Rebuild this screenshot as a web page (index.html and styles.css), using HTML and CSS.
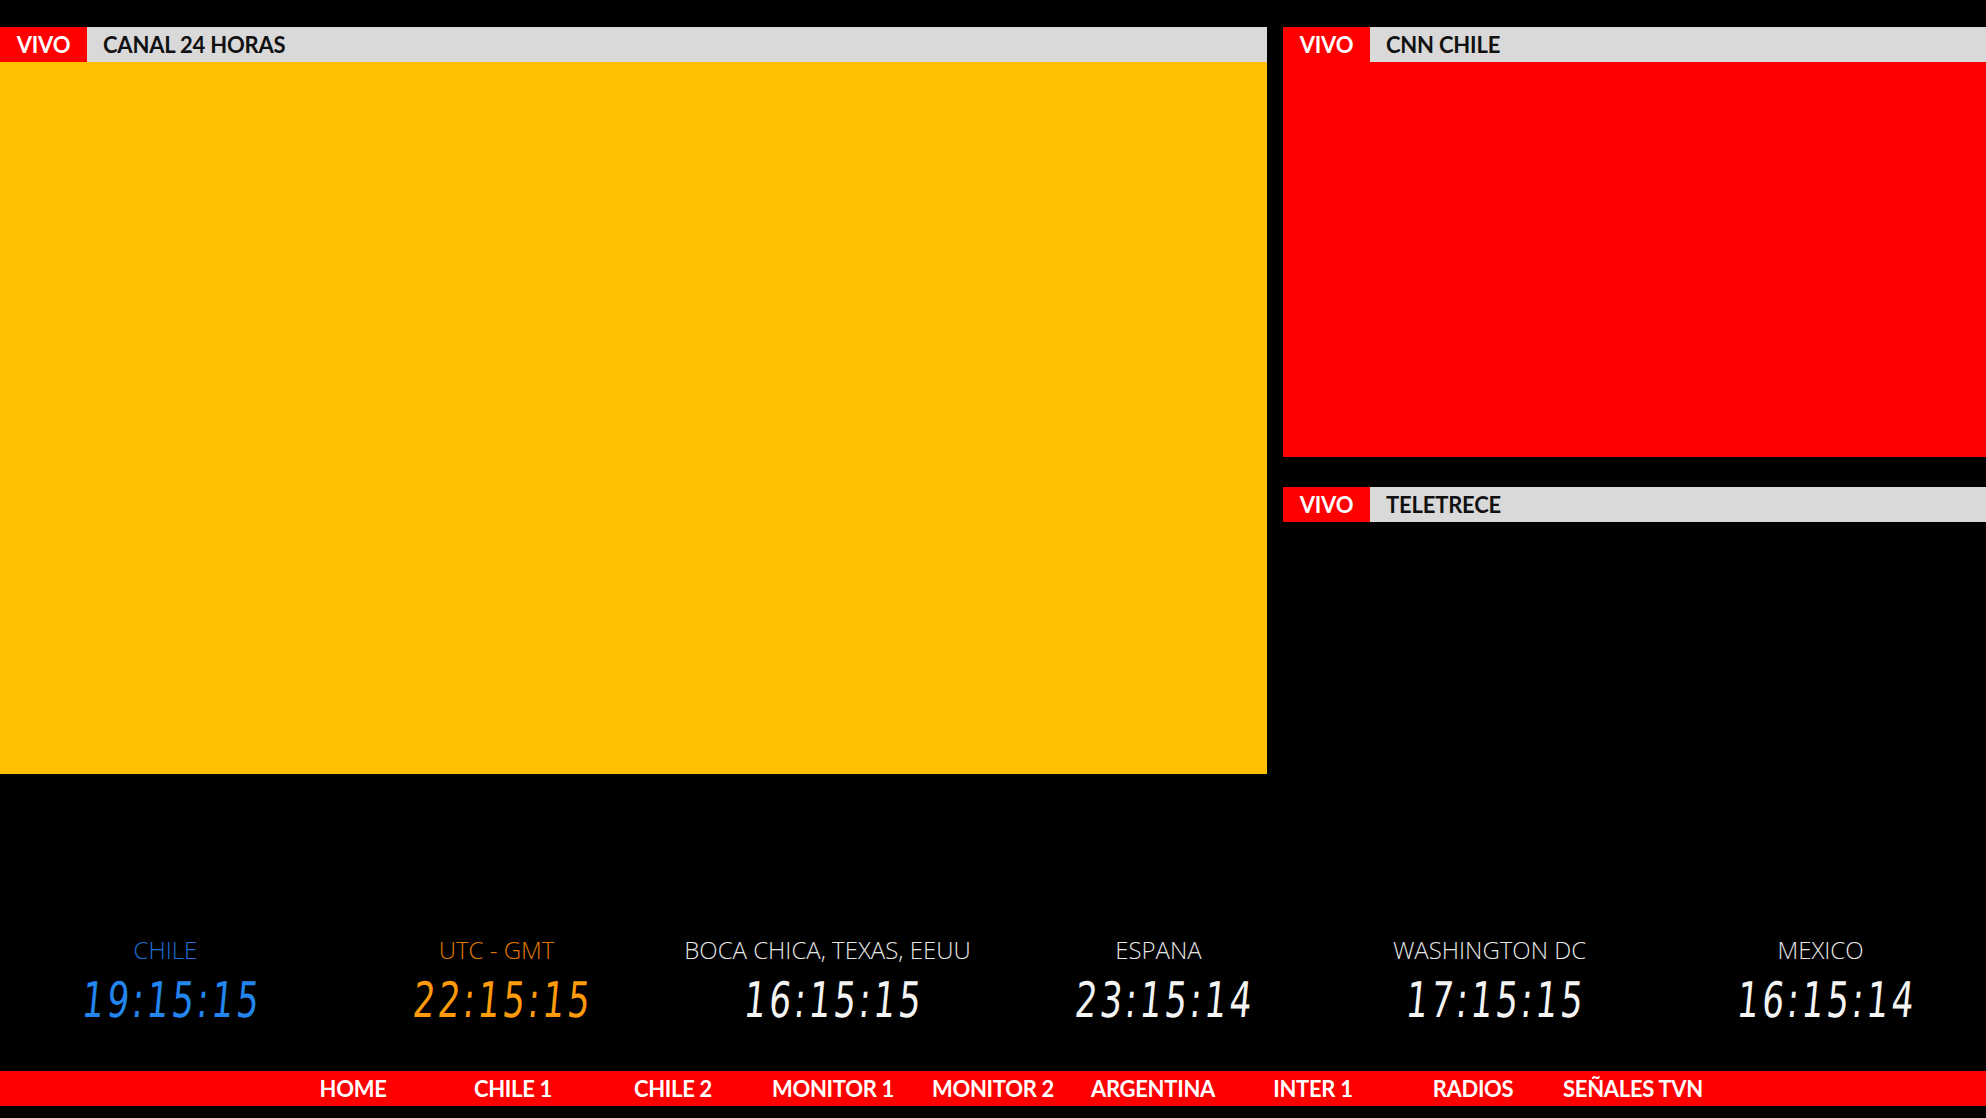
FILE: index.html
```html
<!DOCTYPE html>
<html lang="es">
<head>
<meta charset="utf-8">
<title>Monitor</title>
<link rel="stylesheet" href="styles.css">
</head>
<body>
<div class="page">
  <div class="screens">
    <section class="panel panel-main">
      <header class="panel-head"><span class="live">VIVO</span><span class="channel">CANAL 24 HORAS</span></header>
      <div class="video video-main yellow"></div>
    </section>
    <div class="side">
      <section class="panel">
        <header class="panel-head"><span class="live">VIVO</span><span class="channel">CNN CHILE</span></header>
        <div class="video video-side red"></div>
      </section>
      <section class="panel">
        <header class="panel-head"><span class="live">VIVO</span><span class="channel">TELETRECE</span></header>
        <div class="video video-side black"></div>
      </section>
    </div>
  </div>

  <div class="clocks">
    <div class="clock blue"><div class="place">CHILE</div><div class="time"><span>19:15:15</span></div></div>
    <div class="clock orange"><div class="place">UTC - GMT</div><div class="time"><span>22:15:15</span></div></div>
    <div class="clock white"><div class="place">BOCA CHICA, TEXAS, EEUU</div><div class="time"><span>16:15:15</span></div></div>
    <div class="clock white"><div class="place">ESPANA</div><div class="time"><span>23:15:14</span></div></div>
    <div class="clock white"><div class="place">WASHINGTON DC</div><div class="time"><span>17:15:15</span></div></div>
    <div class="clock white"><div class="place">MEXICO</div><div class="time"><span>16:15:14</span></div></div>
  </div>

  <nav class="menu">
    <a class="menu-item">HOME</a>
    <a class="menu-item">CHILE 1</a>
    <a class="menu-item">CHILE 2</a>
    <a class="menu-item">MONITOR 1</a>
    <a class="menu-item">MONITOR 2</a>
    <a class="menu-item">ARGENTINA</a>
    <a class="menu-item">INTER 1</a>
    <a class="menu-item">RADIOS</a>
    <a class="menu-item">SEÑALES TVN</a>
  </nav>
</div>
</body>
</html>
```

FILE: styles.css
```css
* { box-sizing: border-box; }
html, body {
  margin: 0;
  padding: 0;
  background: #000;
}
body {
  width: 1986px;
  height: 1118px;
  overflow: hidden;
}
.page {
  height: 1118px;
  display: flex;
  flex-direction: column;
  padding-top: 27px;
  padding-bottom: 12px;
}
.screens {
  display: flex;
  gap: 16px;
  align-items: flex-start;
}
.panel-main { width: 1267px; flex: none; }
.side {
  flex: 1;
  display: flex;
  flex-direction: column;
  gap: 30px;
}
.panel-head {
  height: 35px;
  display: flex;
  align-items: center;
  background: #d9d9d9;
  font-family: "Lato", "Liberation Sans", sans-serif;
  font-weight: 700;
  font-size: 22px;
  letter-spacing: -0.2px;
}
.live {
  width: 87px;
  height: 100%;
  background: #ff0000;
  color: #fff;
  display: flex;
  align-items: center;
  justify-content: center;
}
.channel {
  padding-left: 16px;
  color: #111;
}
.video-main { height: 712px; }
.video-side { height: 395px; }
.yellow { background: #ffc000; }
.red { background: #ff0000; }
.black { background: #000; }

.clocks {
  margin-top: auto;
  display: grid;
  grid-template-columns: repeat(6, 1fr);
  margin-bottom: 47px;
}
.clock { text-align: center; }
.place {
  font-family: "Open Sans", "Liberation Sans", sans-serif;
  font-weight: 300;
  font-size: 24px;
  line-height: 30px;
}
.time {
  margin-top: 13px;
  padding-left: 12px;
  height: 46px;
  line-height: 46px;
}
.time span {
  display: inline-block;
  font-family: "DejaVu Sans Condensed", "DejaVu Sans", sans-serif;
  font-weight: 400;
  font-size: 49px;
  letter-spacing: 4px;
  transform: scaleX(0.78) skewX(-7deg);
}
.blue .place { color: #1c6fd6; }
.blue .time { color: #2385ee; }
.orange .place { color: #e07800; }
.orange .time { color: #ff9a0a; }
.white .place { color: #e6e6e6; }
.white .time { color: #f4f4f4; }

.menu {
  height: 35px;
  background: #ff0000;
  display: flex;
  justify-content: center;
  align-items: center;
}
.menu-item {
  width: 160px;
  text-align: center;
  color: #fff;
  font-family: "Lato", "Liberation Sans", sans-serif;
  font-weight: 700;
  font-size: 22px;
  letter-spacing: -0.3px;
}
```
